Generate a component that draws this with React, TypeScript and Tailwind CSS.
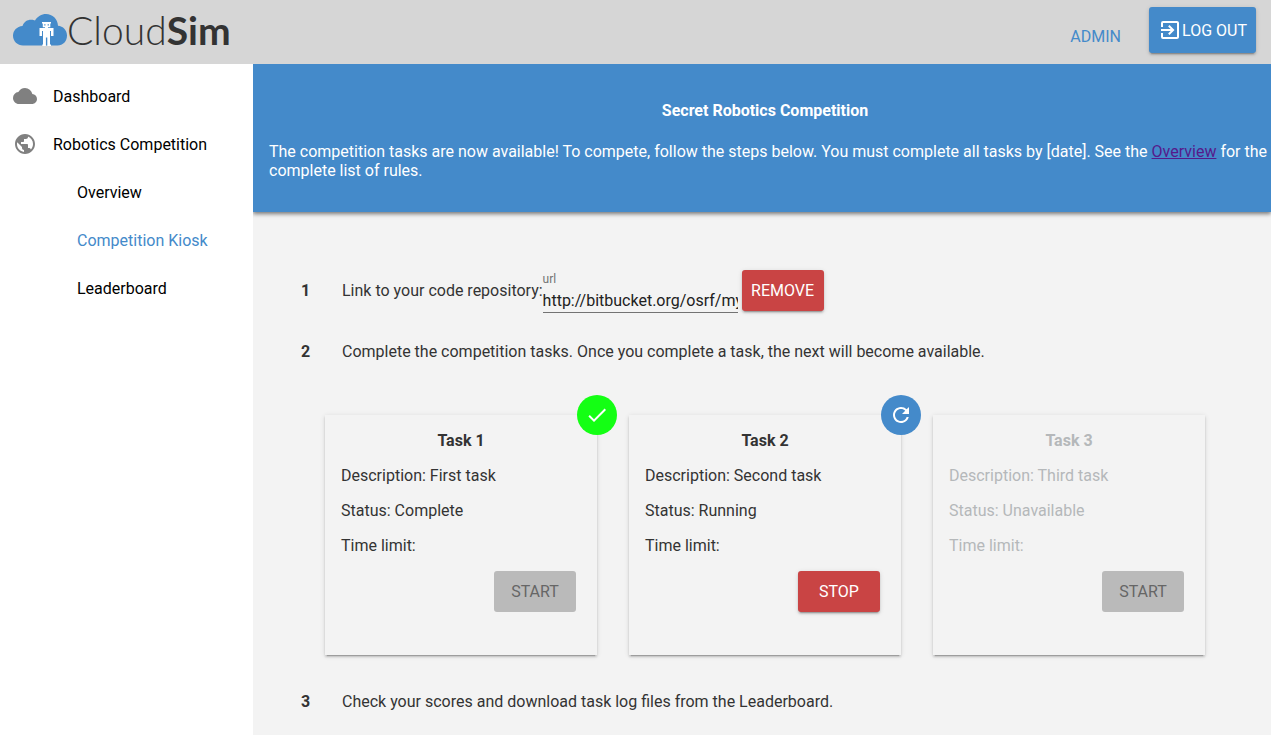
import React from "react";
import {
  MdCloud,
  MdPublic,
  MdCheck,
  MdRefresh,
  MdExitToApp,
} from "react-icons/md";

type Task = {
  name: string;
  description: string;
  status: string;
  state: "complete" | "running" | "unavailable";
};

const tasks: Task[] = [
  { name: "Task 1", description: "First task", status: "Complete", state: "complete" },
  { name: "Task 2", description: "Second task", status: "Running", state: "running" },
  { name: "Task 3", description: "Third task", status: "Unavailable", state: "unavailable" },
];

const raised =
  "shadow-[0_2px_2px_0_rgba(0,0,0,0.14),0_1px_5px_0_rgba(0,0,0,0.12),0_3px_1px_-2px_rgba(0,0,0,0.2)]";

function Logo() {
  return (
    <a href="#home" className="flex items-center text-[#333333]" aria-label="CloudSim">
      <svg width="54" height="32" viewBox="0 0 54 32" aria-hidden="true">
        <path
          d="M10 31.500C4.500 31.500 0 27.300 0 21.800C0 16.500 4 12.500 9.500 12C11 7.500 14.500 5.500 18.500 5.700C20 5.800 21 6 22 6.500C24.500 2.500 28.500 0 33 0C39.500 0 44.600 5 45 11.700C50 12 54 16.200 54 21.500C54 27.200 50 31.500 44.500 31.500Z"
          fill="#448aca"
        />
        <path
          d="M29 8H38V9.500H37.300V13.300H35V14H40.500V22H38V17H37V30.500H38V32H34.300V23.500H32.900V32H29.300V30.500H30V17H29V22H26.500V14H32V13.300H29.800V9.500H29Z"
          fill="#ffffff"
        />
        <path d="M31.200 10.300h1.300v1.200h-1.300zM34.600 10.300h1.300v1.200h-1.300z" fill="#448aca" />
      </svg>
      <span className="font-[Lato,sans-serif] text-[39px] leading-[48px] font-light">
        Cloud<span className="font-bold">Sim</span>
      </span>
    </a>
  );
}

function Sidebar() {
  return (
    <nav className="w-[253px] shrink-0 bg-white py-2 text-black">
      <a href="#dashboard" className="flex h-12 items-center gap-4 pl-[13px]">
        <MdCloud size={24} className="text-[#808080]" />
        Dashboard
      </a>
      <a href="#competition" className="flex h-12 items-center gap-4 pl-[13px]">
        <MdPublic size={24} className="text-[#808080]" />
        Robotics Competition
      </a>
      <a href="#overview" className="flex h-12 items-center pl-[77px]">
        Overview
      </a>
      <a href="#kiosk" aria-current="page" className="flex h-12 items-center pl-[77px] text-[#448aca]">
        Competition Kiosk
      </a>
      <a href="#leaderboard" className="flex h-12 items-center pl-[77px]">
        Leaderboard
      </a>
    </nav>
  );
}

function TaskCard({ task }: { task: Task }) {
  const unavailable = task.state === "unavailable";
  return (
    <article className="relative flex min-h-60 flex-1 flex-col gap-4 bg-[#f3f3f3] p-4 shadow-[0_2px_2px_0_rgba(0,0,0,0.14),0_1px_5px_0_rgba(0,0,0,0.12),0_3px_1px_-2px_rgba(0,0,0,0.2)]">
      {task.state === "complete" && (
        <span className="absolute -top-5 -right-5 flex size-10 items-center justify-center rounded-full bg-[#14ff14] text-white">
          <MdCheck size={24} />
        </span>
      )}
      {task.state === "running" && (
        <span className="absolute -top-5 -right-5 flex size-10 items-center justify-center rounded-full bg-[#448aca] text-white">
          <MdRefresh size={24} />
        </span>
      )}
      <div className={unavailable ? "flex flex-col gap-4 text-[#b5b8ba]" : "flex flex-col gap-4"}>
        <h3 className="text-center font-bold">{task.name}</h3>
        <p>Description: {task.description}</p>
        <p>Status: {task.status}</p>
        <p>Time limit:</p>
      </div>
      {task.state === "running" ? (
        <button type="button" className={`mr-[5px] h-[41px] w-[82px] self-end rounded-[3px] bg-[#c94444] text-white ${raised}`}>
          STOP
        </button>
      ) : (
        <button type="button" disabled className="mr-[5px] h-[41px] w-[82px] self-end rounded-[3px] bg-[#bababa] text-[#666666]">
          START
        </button>
      )}
    </article>
  );
}

export default function App() {
  return (
    <div className="flex min-h-screen flex-col bg-[#f3f3f3] font-[Roboto,sans-serif] text-base leading-[19px] text-[#333333]">
      <header className="flex h-16 items-center justify-between bg-[#d6d6d6] pr-[15px] pb-1 pl-[13px]">
        <Logo />
        <div className="flex items-center gap-7">
          <a href="#admin" className="pt-3 text-[#448aca]">
            ADMIN
          </a>
          <button type="button" className={`flex h-[46px] w-[107px] items-center justify-center rounded-[3px] bg-[#448aca] text-white ${raised}`}>
            <MdExitToApp size={24} />
            LOG OUT
          </button>
        </div>
      </header>
      <div className="flex flex-1">
        <Sidebar />
        <main className="min-w-0 flex-1 overflow-hidden">
          <section className="bg-[#448aca] pt-[37px] pr-0.5 pb-8 pl-4 text-white shadow-[0_2px_4px_rgba(0,0,0,0.5)]">
            <h1 className="pr-2 text-center font-bold">Secret Robotics Competition</h1>
            <p className="mt-[22px]">
              The competition tasks are now available! To compete, follow the steps below. You must complete all
              tasks by [date]. See the{" "}
              <a href="#overview" className="text-[#551a8b] underline">
                Overview
              </a>{" "}
              for the complete list of rules.
            </p>
          </section>
          <ol className="pt-[58px] pr-2.5 pb-6 pl-4">
            <li className="grid grid-cols-[41px_1fr] items-start pl-8">
              <span className="pt-[11px] font-bold">1</span>
              <div className="flex items-start">
                <span className="pt-[11px]">Link to your code repository:</span>
                <div className="flex w-[195px] flex-col">
                  <label htmlFor="url" className="pt-0.5 text-xs leading-[14px] text-[#737373]">
                    url
                  </label>
                  <input
                    id="url"
                    type="text"
                    defaultValue="http://bitbucket.org/osrf/myrepo"
                    className="h-[27px] w-full border-b border-[#737373] bg-transparent pt-0.5 text-[#212121] outline-none"
                  />
                </div>
                <button type="button" className={`ml-1 h-[41px] w-[82px] rounded-[3px] bg-[#c94444] text-white ${raised}`}>
                  REMOVE
                </button>
              </div>
            </li>
            <li className="mt-[29px]">
              <div className="grid grid-cols-[41px_1fr] pl-8">
                <span className="font-bold">2</span>
                <p>Complete the competition tasks. Once you complete a task, the next will become available.</p>
              </div>
              <div className="mt-[54px] flex gap-8 px-14">
                {tasks.map((task) => (
                  <TaskCard key={task.name} task={task} />
                ))}
              </div>
            </li>
            <li className="mt-[37px] grid grid-cols-[41px_1fr] pl-8">
              <span className="font-bold">3</span>
              <p>Check your scores and download task log files from the Leaderboard.</p>
            </li>
          </ol>
        </main>
      </div>
    </div>
  );
}
